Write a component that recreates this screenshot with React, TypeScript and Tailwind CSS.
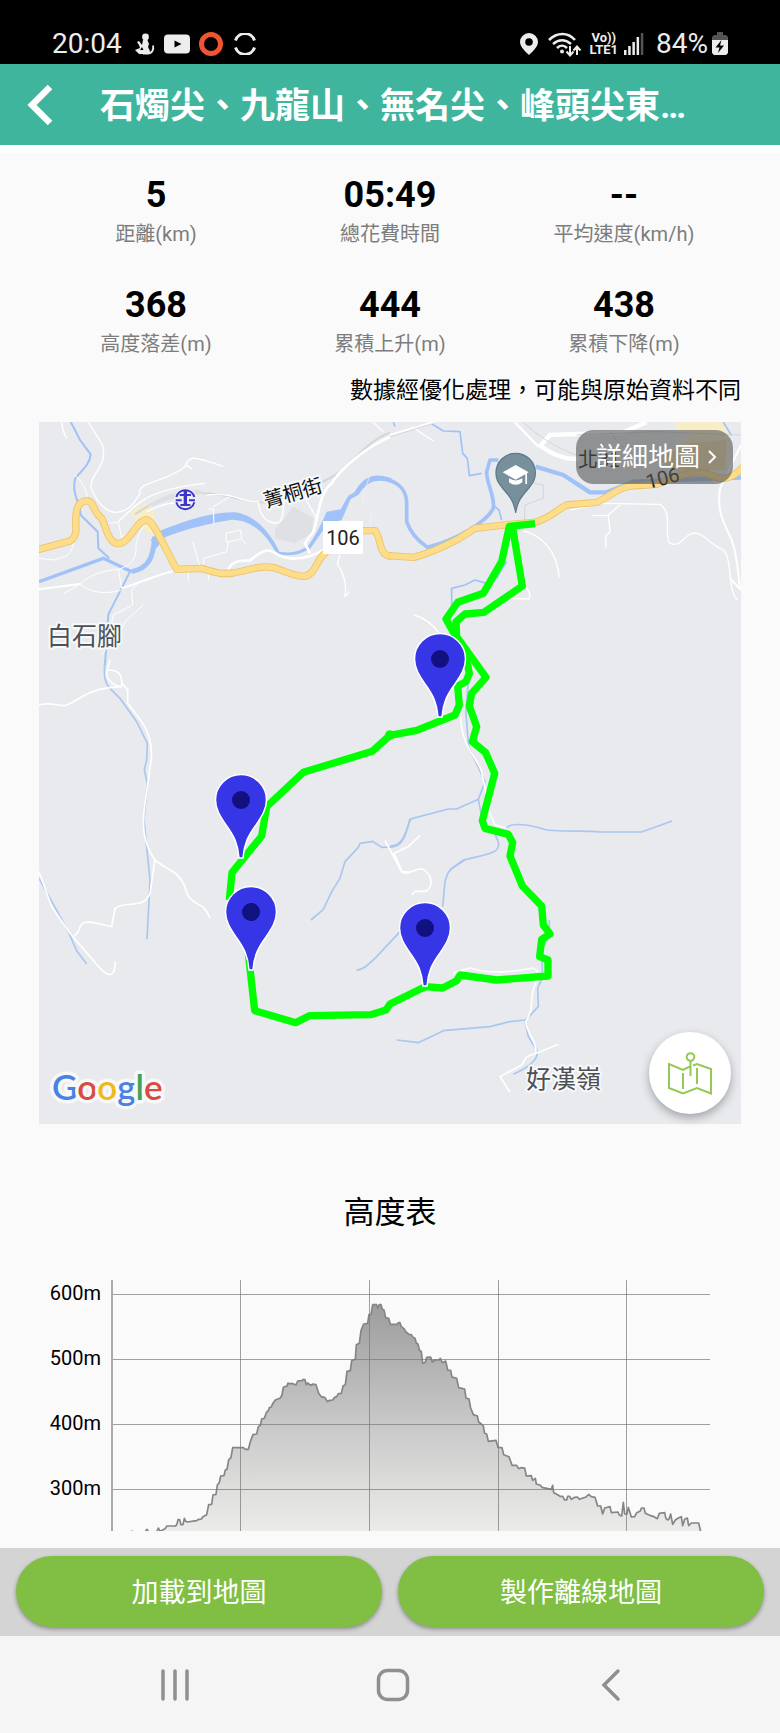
const stats = [
  { value: "5", label: "距離(km)" },
  { value: "05:49", label: "總花費時間" },
  { value: "--", label: "平均速度(km/h)" },
  { value: "368", label: "高度落差(m)" },
  { value: "444", label: "累積上升(m)" },
  { value: "438", label: "累積下降(m)" },
];

const waypoints = [
  { x: 440, y: 659 },
  { x: 241, y: 800 },
  { x: 251, y: 912 },
  { x: 425, y: 928 },
];

const elevation =
  "300,816 306,814 312,816 345,816 351,808 356,816 380,816 385,804 390,814 398,810 405,806 411,798 437,798 441,792 444,779 449,779 453,794 459,794 463,775 467,784 472,786 500,782 504,779 514,777 518,771 530,764 536,734 545,733 549,705 558,703 562,675 568,668 572,648 582,647 586,630 591,628 596,600 603,592 608,563 640,563 646,568 655,568 661,545 669,524 680,522 685,500 691,496 695,477 703,475 709,458 716,450 718,443 724,441 728,431 736,420 751,414 756,405 760,382 771,378 774,369 780,372 785,370 798,375 803,363 816,362 818,359 825,359 829,374 833,369 839,374 845,376 848,372 858,374 866,400 874,410 885,413 892,425 899,421 908,420 914,412 920,410 925,401 934,400 939,378 946,374 951,334 961,332 965,302 976,298 979,254 988,250 993,212 1001,192 1013,190 1017,164 1023,163 1028,134 1040,134 1043,145 1048,134 1053,134 1057,148 1062,150 1067,173 1076,175 1081,193 1100,193 1106,188 1110,188 1114,200 1122,206 1128,216 1137,223 1144,224 1149,232 1155,235 1159,249 1164,252 1168,270 1174,275 1178,310 1186,307 1190,292 1202,291 1207,306 1215,300 1227,300 1231,295 1237,308 1247,303 1253,330 1262,331 1266,351 1280,355 1286,383 1304,387 1308,414 1317,417 1322,444 1330,464 1342,468 1346,486 1354,492 1360,498 1364,520 1370,522 1375,544 1398,541 1404,562 1416,563 1421,584 1437,590 1446,616 1460,616 1466,626 1473,623 1484,624 1489,648 1504,647 1508,661 1516,655 1519,672 1531,676 1536,682 1564,688 1568,676 1571,698 1586,706 1590,709 1598,709 1604,720 1610,720 1613,709 1619,709 1624,718 1634,712 1642,711 1648,718 1668,711 1676,703 1684,710 1695,712 1703,738 1712,738 1718,762 1724,744 1740,740 1744,758 1764,756 1768,765 1775,768 1780,727 1784,762 1791,762 1795,742 1804,771 1814,770 1820,758 1830,754 1835,744 1842,744 1846,760 1862,767 1872,770 1882,776 1888,760 1904,758 1908,776 1914,780 1918,775 1922,762 1928,793 1936,780 1944,775 1950,772 1954,770 1958,797 1964,778 1972,774 1976,797 1984,789 2006,789 2012,814";

const westRoad =
  "M20 405L120 378C135 370 138 350 138 340C135 290 140 258 172 257C195 262 185 285 215 310C230 340 235 385 265 386C300 385 315 320 350 314C370 320 380 350 440 463L515 460C560 475 580 478 610 474C660 465 690 450 730 458C760 465 790 485 825 484C860 475 860 430 885 415M990 347H1035C1055 370 1045 422 1082 423";
const eastRoad =
  "M-5 422L72 427C120 415 180 385 205 372L255 340L360 328L435 322C480 310 500 285 530 270L620 262C660 245 680 220 720 213L800 208C860 185 920 160 960 180C1000 200 1030 190 1060 155";

function StatusBar() {
  return (
    <div className="flex h-16 items-center justify-between bg-black px-[52px] pt-6 text-[28px] leading-8 text-[#ededed]">
      <div className="flex items-center gap-[9px]">
        <span className="mr-1">20:04</span>
        <svg width="20" height="22" viewBox="0 0 20 22" fill="#ededed">
          <circle cx="10.500" cy="4" r="3.400" />
          <path d="M8 7l4-1 2 5-1 3 2 4-1 3H4l-4-4 5-2-1-3-2-3 2-1 3 4z" />
          <path d="M8 20.500h5c4 0 6-4 5-8" fill="none" stroke="#ededed" strokeWidth="1.800" />
          <path d="M5 17l2-3 1.500 3z" fill="#000" />
        </svg>
        <svg width="26" height="20" viewBox="0 0 26 20">
          <rect width="26" height="19" y="0.500" rx="4" fill="#ededed" />
          <path d="M10.500 6.500l7 3.500-7 3.500z" fill="#000" />
        </svg>
        <svg width="24" height="24" viewBox="0 0 24 24">
          <circle cx="12" cy="12" r="9.500" fill="none" stroke="#f1552f" strokeWidth="5" />
        </svg>
        <svg className="ml-0.5" width="22" height="22" viewBox="0 0 22 22" fill="none" stroke="#ededed" strokeWidth="3">
          <path d="M1.500 7.500a10 10 0 0 1 19 0M1.500 14.500a10 10 0 0 0 19 0" />
        </svg>
      </div>
      <div className="flex items-center">
        <svg className="mr-[10px]" width="18" height="22" viewBox="0 0 18 22">
          <path d="M9 0a9 9 0 0 1 9 9c0 5-6 10-9 13C6 19 0 14 0 9a9 9 0 0 1 9-9z" fill="#ededed" />
          <circle cx="9" cy="9" r="3.800" fill="#000" />
        </svg>
        <svg className="mr-2" width="34" height="25" viewBox="0 0 34 25" fill="none" stroke="#ededed" strokeWidth="2.500">
          <path d="M1 8c8-8 19-8 26 0M5 12c6-5 12-5 18 0M9 16c3-3 7-3 10 0" />
          <circle cx="14" cy="19.500" r="2" fill="#ededed" stroke="none" />
          <path d="M22 14v9M18.500 19.500l3.500 4 3.500-4M29 23v-8M25.500 18.500l3.500-4 3.500 4" strokeWidth="2" />
        </svg>
        <div className="mr-[6px] flex flex-col items-center text-[13px] font-bold leading-[12px]">
          <span>Vo))</span>
          <span>LTE1</span>
        </div>
        <svg className="mr-3" width="20" height="22" viewBox="0 0 20 22" fill="#ededed">
          <path d="M0 17h2.500v5H0zM4.200 13h2.500v9H4.200zM8.400 9h2.500v13H8.400zM12.600 4h2.500v18h-2.500z" />
          <path d="M16.800 0h2.500v22h-2.500z" fill="#555" />
        </svg>
        <span className="mr-1">84%</span>
        <svg width="16" height="24" viewBox="0 0 16 24">
          <path d="M5 0h6v3h3l2 2v4H0V5l2-2h3z" fill="#555" />
          <path d="M0 8h16v13l-2 2H2l-2-2z" fill="#ededed" />
          <path d="M9.500 8L3.500 15.500h4L6 21l6-7.500H8z" fill="#000" />
        </svg>
      </div>
    </div>
  );
}

function Pin({ x, y }: { x: number; y: number }) {
  return (
    <g transform={`translate(${x} ${y})`}>
      <path
        d="M0-25.500A25.500 25.500 0 0 1 25.500 0C25.500 9 21 16 15 25C7 36 3 44 2 58H-2C-3 44-7 36-15 25C-21 16-25.500 9-25.500 0A25.500 25.500 0 0 1 0-25.500Z"
        fill="#3636e6"
        stroke="#fff"
        strokeWidth="1.500"
      />
      <circle r="9" fill="#11117f" />
    </g>
  );
}

function TrailMap() {
  return (
    <svg className="block w-full bg-[#e8eaee]" viewBox="39 422 702 702" role="img" aria-label="路線地圖">
      {/* north-west: river, railway and Jingtong */}
      <g transform="translate(30 415) scale(.33333)" fill="none" strokeLinejoin="round">
        <path d="M735 345L790 275L850 310L845 355L795 385L735 370Z" fill="#dfe0e3" />
        <path d="M300 290L345 265L375 290L370 365L345 345L325 325Z" fill="#f8edc7" />
        <g stroke="#a1c2f8">
          <path d="M122 20L150 75L182 118C180 150 150 170 135 192C125 240 150 260 152 300L203 350L205 400L238 430M300 470L235 598L225 750" strokeWidth="6" />
          <path d="M27 500L220 430L305 470" strokeWidth="10" />
          <path d="M305 470C355 460 370 430 374 365" strokeWidth="15" />
        </g>
        <path
          d="M362 375L395 345L450 325C510 305 560 292 610 292C670 295 720 350 748 410C790 418 820 405 838 388C860 355 875 325 890 290L932 283L955 242L973 232C1000 185 1030 170 1085 190V204C1040 190 1015 195 985 240L962 252L935 315L890 330L842 400C810 420 780 425 740 417C710 360 670 315 605 314C540 325 450 345 400 370L380 400Z"
          fill="#a1c2f8"
        />
        <path d="M315 298C400 240 460 225 520 235C600 235 640 265 710 262C800 225 870 215 930 170C990 115 1030 70 1080 52" stroke="#d3d5d9" strokeWidth="6" />
        <path d="M350 275C400 240 440 228 510 225L530 235C480 240 420 250 380 270Z" fill="#dedfe2" />
        <g stroke="#fff" strokeWidth="4">
          <path d="M175 22L215 85C240 150 180 175 183 215C200 270 240 300 270 290C300 285 315 260 330 235C320 200 400 205 465 155C480 110 510 135 580 154M465 148L487 162M265 320C320 270 340 225 525 205M350 290C420 255 450 265 470 262M530 240C610 230 640 265 685 260C690 320 730 330 750 320C765 300 755 290 765 240" />
          <path d="M135 180C155 200 170 220 172 255M130 378C130 430 90 425 75 435L27 430M100 537L150 507C190 470 240 465 265 463C310 450 320 425 318 390C325 350 340 340 345 320M235 325L265 322L275 368L330 330M150 507C190 540 240 535 275 525M265 463L275 520M330 500L305 525L308 570L250 600L240 645M340 570L290 615L275 640L215 720M488 380L510 455M518 460L522 430L590 410L595 380M587 355L632 345L635 372L590 382ZM635 372L647 387M475 468V498M535 475V495M535 282H550L552 328M550 275L600 245" strokeWidth="3" />
          <path d="M27 523L150 507M275 520C340 500 380 480 430 468" strokeWidth="6" />
          <path d="M595 468C600 440 630 435 660 437C700 400 720 400 745 420C790 440 840 430 890 400M840 415L825 385L850 350C870 290 865 240 905 205C925 170 1000 100 1080 65" strokeWidth="8" />
          <path d="M820 240L860 310M1060 50L1030 22M930 420C920 450 920 450 930 460C945 490 950 510 945 545L958 530M95 22Q98 50 110 70" />
          <path d="M998 240L1000 265L1025 290L1020 335M1000 240L1020 180" stroke="#f4f5f7" strokeWidth="2" />
        </g>
        <g strokeLinecap="round">
          <path d={westRoad} stroke="#e9c36a" strokeWidth="22" />
          <path d={westRoad} stroke="#fddc8a" strokeWidth="17" />
        </g>
        <circle cx="466" cy="253" r="34" fill="#eceef4" />
        <g stroke="#3d35c9" strokeWidth="6">
          <path d="M439 246A28 28 0 0 1 493 246M439 262A28 28 0 0 0 493 262M437 256H455M477 256H495M449 240H483M451 270H481" />
          <path d="M466 226V240M466 240V270" strokeWidth="10" />
        </g>
      </g>

      {/* north-east: river, provincial road and side lanes */}
      <g transform="translate(390 415) scale(.33333)" fill="none" strokeLinejoin="round">
        <path d="M855 22H1000L1020 70L1010 160L960 175L800 140L900 60L855 40Z" fill="#f8edc7" />
        <path d="M800 130L900 85L1010 75L1005 165L930 165L860 170Z" fill="#f0dba6" />
        <g stroke="#a1c2f8">
          <path d="M10 22L15 35M118 22L160 48L210 50L218 115L232 130L238 182L275 175M1000 22L1025 62M185 570V520L225 510L255 495L290 505L320 490L350 440M315 275L327 285L335 315" strokeWidth="5" />
          <path d="M-5 195C30 205 50 230 50 265V320C60 350 80 375 112 397C200 375 290 320 310 280C315 240 290 210 290 170L300 135L325 135" strokeWidth="11" />
          <path d="M437 155L520 180L600 232H650L730 200L1053 188" strokeWidth="13" />
        </g>
        <g stroke="#fff">
          <path d="M0 60L130 22M445 95L375 22" strokeWidth="7" />
          <path d="M448 95L480 60L700 52L770 22M448 90C500 130 540 135 570 130" strokeWidth="13" />
          <path d="M65 35L130 78M400 348C450 360 500 400 508 488M340 550L415 552C425 540 415 525 405 515M72 600C110 610 130 630 148 655M540 285L640 265L810 268C850 290 820 370 840 385C880 400 880 350 920 355C950 360 960 390 1000 405C1030 440 1010 520 1042 555M690 270L655 300L660 350L648 362L647 398M655 302L605 302" strokeWidth="4" />
          <path d="M1053 90L990 220C980 290 1000 320 1025 375C1045 430 1045 490 1050 520M1053 525L1020 490" strokeWidth="6" />
        </g>
        <path d="M0 65L130 25M400 22C440 60 500 100 560 120M560 60L800 50L1053 60M660 50L700 100M430 205L460 210V250L405 270L403 320" stroke="#d3d5d9" strokeWidth="3" />
        <path d={eastRoad} stroke="#e9c36a" strokeWidth="22" />
        <path d={eastRoad} stroke="#fddc8a" strokeWidth="17" />
        <path d="M377 292C372 260 360 245 340 222C325 203 318 195 318 174A59 59 0 0 1 436 174C436 195 429 203 414 222C394 245 382 260 377 292Z" fill="#78909c" stroke="#5f7a88" strokeWidth="4" />
        <path d="M338 172L377 150L416 172L377 194ZM357 190Q377 203 397 190V202Q377 217 357 202ZM406 175H411V207H406Z" fill="#fff" />
      </g>

      {/* valley between the two ridges */}
      <g transform="translate(390 600) scale(.33333)" fill="none" strokeLinejoin="round">
        <path d="M235 240L228 340L236 440L285 545L265 598L200 627L175 627L65 656C50 665 50 740 0 738M265 598L275 650M350 683C370 665 420 675 470 690C540 697 570 690 630 696H755L846 663M315 705C350 760 300 760 220 780L180 810" stroke="#abc6ef" strokeWidth="5" />
        <path d="M212 350C215 440 260 470 275 515L300 640L315 675L345 683M90 706L55 740L12 760L35 810" stroke="#fff" strokeWidth="5" />
      </g>

      {/* west slope */}
      <g transform="translate(30 660) scale(.33333)" fill="none" strokeLinejoin="round">
        <path d="M225 0C220 50 225 70 240 85L270 115L320 185L352 250L350 300L343 330L352 370L342 480L360 660L351 838M27 655L115 815L140 872L170 912M1140 475C1120 570 1100 560 1055 562L1028 544L990 550L985 562L945 605L930 655L905 695L880 748L843 780M1110 815L1040 890C1010 920 1000 927 980 931M1100 1140L1165 1148L1240 1112L1380 1100L1440 1085L1485 1080" stroke="#abc6ef" strokeWidth="5" />
        <path d="M240 0L232 30C220 60 260 80 275 80C275 60 280 30 235 30M27 135C60 125 80 137 105 137C150 120 170 90 240 83L270 80M275 68L293 90V130L320 165C360 210 370 270 362 310L345 430C335 500 340 550 375 600C410 630 440 630 460 670C475 700 460 710 520 742Q532 755 540 774M375 600L360 700C340 750 290 720 255 745L245 800C200 790 160 775 150 800Q148 815 133 828M27 635L65 740L120 820L210 925Q255 970 256 905M1065 542L1115 635L1140 637" stroke="#fff" strokeWidth="5" />
      </g>

      {/* east slope */}
      <g transform="translate(390 860) scale(.33333)" fill="none" strokeLinejoin="round">
        <path d="M158 140C165 80 160 50 185 25L225 0M478 180V230L455 270L458 350L443 385L445 440L405 482L415 530L440 570C450 600 410 625 370 643" stroke="#abc6ef" strokeWidth="5" />
        <path d="M10 -20L35 35C60 50 75 20 100 28C135 50 125 90 105 94H75L66 105M190 340L240 324C290 340 340 340 430 324L443 335M440 360C410 430 440 430 407 485C410 520 440 540 438 580L410 590L395 615L330 650L360 697M440 580L505 553" stroke="#fff" strokeWidth="5" />
      </g>

      {/* recorded track */}
      <g transform="translate(390 600) scale(.33333)" fill="none" stroke="#0f0" strokeLinejoin="round" strokeWidth="22">
        <path d="M435 -229L358 -221L335 -115L280 -20L203 7L168 57L225 160L238 220L228 245L203 258L208 315L195 345L80 391L0 406L-53 454L-260 517L-370 620L-385 708L-474 818L-482 900" />
        <path d="M368 -216L397 -42L282 37L225 42L198 65L200 110L288 232L245 280L238 318L260 380L247 425L287 458L314 520L277 662L285 685L355 703L368 728L360 768L397 858L455 918L460 975L480 1002L455 1018L449 1070L474 1080V1128L320 1140L210 1125L200 1142L158 1164L105 1160L0 1212L-12 1230L-58 1244L-242 1247L-283 1268L-406 1232L-425 1060" />
        <circle cx="-1" cy="405" r="14" fill="#0f0" stroke="none" />
      </g>
      {waypoints.map((point) => (
        <Pin key={`${point.x}-${point.y}`} x={point.x} y={point.y} />
      ))}

      <g
        className="font-['Noto_Sans_CJK_TC','Roboto',sans-serif]"
        fill="#4d5156"
        stroke="#f7f8f9"
        strokeWidth="4"
        strokeLinejoin="round"
        paintOrder="stroke"
        fontSize="25"
      >
        <text x="47" y="645">白石腳</text>
        <text x="526" y="1088">好漢嶺</text>
        <text x="266" y="508" fontSize="20" fill="#111" transform="rotate(-16 266 508)">菁桐街</text>
        <text x="578" y="467" fontSize="20" fill="#111" stroke="none">北31</text>
      </g>
      <rect x="323" y="521" width="40" height="33" fill="#fff" />
      <g className="font-['Roboto',sans-serif]" fontSize="20" fill="#222">
        <text x="343" y="545" textAnchor="middle">106</text>
        <text x="648" y="489" transform="rotate(-14 648 489)">106</text>
      </g>
      <g
        className="font-['Lato',sans-serif]"
        fontSize="35"
        fontWeight="600"
        stroke="#f7f8f9"
        strokeWidth="7"
        strokeLinejoin="round"
        paintOrder="stroke"
      >
        <text x="52" y="1100">
          <tspan fill="#4a82e4">G</tspan>
          <tspan fill="#d94b3f">o</tspan>
          <tspan fill="#efb91c">o</tspan>
          <tspan fill="#4a82e4">g</tspan>
          <tspan fill="#3fa45b">l</tspan>
          <tspan fill="#d94b3f">e</tspan>
        </text>
      </g>
    </svg>
  );
}

function ElevationChart() {
  return (
    <svg className="block w-full" viewBox="39 1280 702 251" role="img" aria-label="高度表">
      <defs>
        <linearGradient id="elevation-fill" x1="0" y1="0" x2="0" y2="1">
          <stop offset="0" stopColor="#9d9d9d" />
          <stop offset="0.500" stopColor="#c6c6c6" />
          <stop offset="1" stopColor="#ececea" />
        </linearGradient>
      </defs>
      <g transform="translate(30 1260) scale(.33333)">
        <polygon points={`${elevation} 300,816`} fill="url(#elevation-fill)" />
        <polyline points={elevation} fill="none" stroke="#858585" strokeWidth="5" strokeLinejoin="round" />
      </g>
      <path
        d="M112 1294.500H710M112 1359.500H710M112 1424.500H710M112 1489.500H710M240.500 1280V1531M369.500 1280V1531M498.500 1280V1531M626.500 1280V1531"
        stroke="#777"
        strokeOpacity=".7"
      />
      <path d="M112 1280V1531" stroke="#aaa" strokeWidth="2" />
      <g className="font-['Roboto',sans-serif]" fontSize="20" textAnchor="end">
        <text x="101" y="1300">600m</text>
        <text x="101" y="1365">500m</text>
        <text x="101" y="1430">400m</text>
        <text x="101" y="1495">300m</text>
      </g>
    </svg>
  );
}

function NavigationBar() {
  return (
    <nav className="flex h-[97px] items-center bg-[#f5f5f5] pr-[60px] pl-[66px] text-[#8f8f8f]">
      <button className="flex flex-1 justify-center" aria-label="最近使用">
        <svg width="30" height="32" viewBox="0 0 30 32" stroke="currentColor" strokeWidth="3.500" strokeLinecap="round">
          <path d="M3 2V30M15 2V30M27 2V30" />
        </svg>
      </button>
      <button className="flex flex-1 justify-center" aria-label="主畫面">
        <svg width="34" height="34" viewBox="0 0 34 34" fill="none" stroke="currentColor" strokeWidth="3.500">
          <rect x="2.500" y="2.500" width="29" height="29" rx="9" />
        </svg>
      </button>
      <button className="flex flex-1 justify-center" aria-label="返回">
        <svg width="20" height="34" viewBox="0 0 20 34" fill="none" stroke="currentColor" strokeWidth="3.500" strokeLinecap="round">
          <path d="M17 3L3 17L17 31" />
        </svg>
      </button>
    </nav>
  );
}

export default function App() {
  return (
    <div className="flex min-h-screen flex-col bg-[#fafafa] font-['Roboto','Noto_Sans_CJK_TC',sans-serif] text-black">
      <StatusBar />
      <header className="flex h-[81px] items-center bg-[#3fb59d] text-white">
        <button className="flex w-[100px] pl-[26px]" aria-label="返回">
          <svg width="28" height="42" viewBox="0 0 28 42" fill="none" stroke="currentColor" strokeWidth="6.500">
            <path d="M24 3L6 21L24 39" />
          </svg>
        </button>
        <h1 className="pt-[5px] text-[35px] font-bold leading-[48px]">石燭尖、九龍山、無名尖、峰頭尖東…</h1>
      </header>

      <main className="flex-1 border-t-8 border-white px-[39px] pb-[17px]">
        <dl className="grid grid-cols-3 gap-y-8 pt-[19px] text-center">
          {stats.map((stat) => (
            <div key={stat.label} className="flex flex-col-reverse">
              <dt className="text-[20px] leading-8 text-[#7d7d7d]">{stat.label}</dt>
              <dd className="text-[36px] font-bold leading-[46px]">{stat.value}</dd>
            </div>
          ))}
        </dl>
        <p className="py-[15px] text-right text-[23px] leading-8">數據經優化處理，可能與原始資料不同</p>

        <div className="relative">
          <TrailMap />
          <button className="absolute top-2 right-2 flex h-[54px] items-center gap-2 rounded-[18px] bg-[#555]/60 pr-4 pl-5 text-[26px] text-white">
            詳細地圖
            <svg width="9" height="14" viewBox="0 0 9 14" fill="none" stroke="currentColor" strokeWidth="2">
              <path d="M1 1L7 7L1 13" />
            </svg>
          </button>
          <button
            className="absolute right-[10px] bottom-[10px] flex size-[82px] items-center justify-center rounded-full bg-white shadow-[0_4px_10px_rgba(0,0,0,0.3)]"
            aria-label="選擇地圖"
          >
            <svg width="44" height="43" viewBox="0 0 44 43" fill="none" stroke="#94c953" strokeWidth="2">
              <path d="M22 14.500L15 18L1 12V36L15 41.500L29 36L43 41.500V17L29 12L25 13.500M15 21V37M29 16V32M22.500 9V24" />
              <circle cx="22.500" cy="5" r="3.800" />
            </svg>
          </button>
        </div>

        <h2 className="pt-[65px] pb-[43px] text-center text-[31px] leading-[48px]">高度表</h2>
        <ElevationChart />
      </main>

      <div className="flex h-[88px] gap-4 bg-[#d4d4d4] px-4 py-2 text-[27px] text-white">
        <button className="h-[71px] flex-1 rounded-full bg-[#80bf43] pt-1 shadow-[0_2px_4px_rgba(0,0,0,0.35)]">加載到地圖</button>
        <button className="h-[71px] flex-1 rounded-full bg-[#80bf43] pt-1 shadow-[0_2px_4px_rgba(0,0,0,0.35)]">製作離線地圖</button>
      </div>
      <NavigationBar />
    </div>
  );
}
